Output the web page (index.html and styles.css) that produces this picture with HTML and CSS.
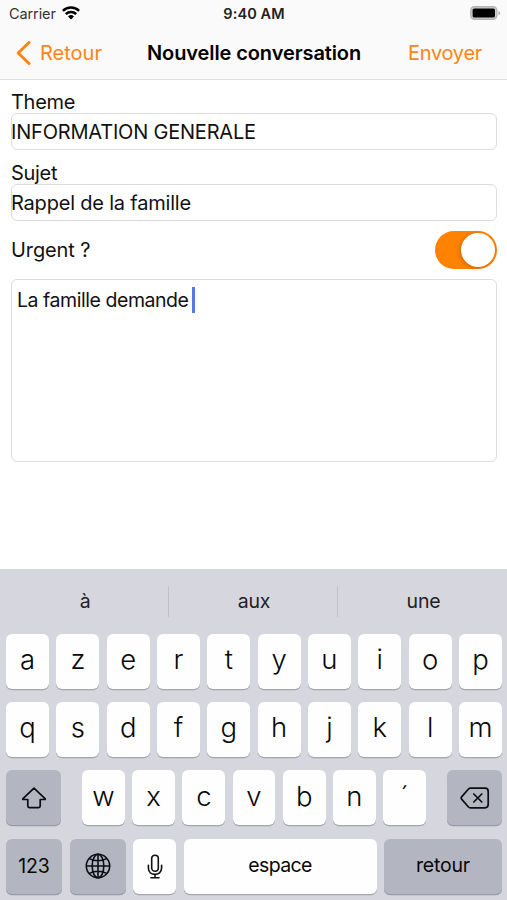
FILE: index.html
```html
<!DOCTYPE html>
<html lang="fr">
<head>
<meta charset="utf-8">
<title>Nouvelle conversation</title>
<link rel="stylesheet" href="styles.css">
</head>
<body>
<div class="screen">
  <header class="top">
    <div class="status">
      <div class="carrier"><span>Carrier</span>
        <svg class="wifi" width="18" height="14" viewBox="0 0 18 14"><g fill="none" stroke="#000" stroke-width="2.5"><path d="M.9 4.9a11.5 11.5 0 0 1 16.2 0"/><path d="M3.8 8.1a7.4 7.4 0 0 1 10.4 0"/></g><path d="M9 13.6 6 10.5a4.3 4.3 0 0 1 6 0z"/></svg>
      </div>
      <span class="clock">9:40 AM</span>
      <svg class="battery" width="31" height="14" viewBox="0 0 31 14"><rect x=".8" y=".8" width="26" height="12.4" rx="3.6" fill="#d0d0d0" stroke="#b4b4b4" stroke-width="1.4"/><rect x="2.6" y="2.4" width="22.4" height="9.2" rx="1.6"/><path d="M28.4 4.7c2.4.8 2.4 3.8 0 4.6z" fill="#b4b4b4"/></svg>
    </div>
    <nav class="nav">
      <a class="back"><svg width="15" height="24" viewBox="0 0 15 24"><path d="M13 1.5 2.2 12 13 22.5" fill="none" stroke="#ff8412" stroke-width="3" stroke-linecap="round" stroke-linejoin="round"/></svg><span>Retour</span></a>
      <h1>Nouvelle conversation</h1>
      <a class="send">Envoyer</a>
    </nav>
  </header>
  <main class="form">
    <div class="label theme">Theme</div>
    <div class="field"><span>INFORMATION GENERALE</span></div>
    <div class="label subject">Sujet</div>
    <div class="field"><span>Rappel de la famille</span></div>
    <div class="urgent"><span>Urgent ?</span><div class="switch"><div class="knob"></div></div></div>
    <div class="area"><span class="msg">La famille demande</span><i class="caret"></i></div>
  </main>
  <section class="keyboard">
    <div class="hints"><span>à</span><span>aux</span><span>une</span></div>
    <div class="row"><b>a</b><b>z</b><b>e</b><b>r</b><b>t</b><b>y</b><b>u</b><b>i</b><b>o</b><b>p</b></div>
    <div class="row"><b>q</b><b>s</b><b>d</b><b>f</b><b>g</b><b>h</b><b>j</b><b>k</b><b>l</b><b>m</b></div>
    <div class="row third">
      <b class="dark side"><svg width="26" height="24" viewBox="0 0 26 24"><path d="M13 2.2 2 12.6q-.8.9.5.9h4.3v6.6q0 1.6 1.6 1.6h9.2q1.6 0 1.6-1.6v-6.6h4.3q1.3 0 .5-.9z" fill="none" stroke="#0c0d14" stroke-width="1.7" stroke-linejoin="round"/></svg></b>
      <div class="letters"><b>w</b><b>x</b><b>c</b><b>v</b><b>b</b><b>n</b><b>´</b></div>
      <b class="dark side"><svg width="30" height="22" viewBox="0 0 30 22"><g fill="none" stroke="#0c0d14" stroke-width="1.7" stroke-linejoin="round" stroke-linecap="round"><path d="M10.5 1.2H25q3.2 0 3.2 3.2v13.2q0 3.2-3.2 3.2H10.5q-1.2 0-2-.8L1.8 12.4q-1.2-1.4 0-2.8L8.5 2q.8-.8 2-.8z"/><path d="m13.8 7 8 8m0-8-8 8"/></g></svg></b>
    </div>
    <div class="row fourth">
      <b class="dark num">123</b>
      <b class="dark"><svg width="26" height="26" viewBox="0 0 26 26"><g fill="none" stroke="#0c0d14" stroke-width="1.6"><circle cx="13" cy="13" r="11.7"/><ellipse cx="13" cy="13" rx="5.8" ry="11.7"/><path d="M13 1.3v23.4M1.3 13h23.4M4.3 5.6q8.7 4.4 17.4 0M4.3 20.4q8.7-4.4 17.4 0"/></g></svg></b>
      <b><svg width="16" height="25" viewBox="0 0 16 25"><g fill="none" stroke="#111" stroke-width="1.6" stroke-linecap="round"><rect x="4.7" y="1.2" width="6.6" height="16" rx="3.3"/><path d="M1.4 11.2v2.9c0 8.4 13.2 8.4 13.2 0v-2.9M8 20.5v3.2M4 23.7h8"/></g></svg></b>
      <b class="word space">espace</b>
      <b class="dark word">retour</b>
    </div>
  </section>
</div>
</body>
</html>
```
FILE: styles.css
```css
* { box-sizing: border-box; }
body { margin: 0; background: #fff; font-family: Inter, "Liberation Sans", sans-serif; color: #111; }
.screen { width: 507px; height: 900px; display: flex; flex-direction: column; overflow: hidden; }
.top { height: 80px; background: #fafafa; border-bottom: 1.5px solid #e0e0e0; }
.status { height: 27px; display: grid; grid-template-columns: 1fr auto 1fr; align-items: center; padding: 0 8px 0 9px; font-size: 14.5px; }
.carrier { display: flex; align-items: center; gap: 6px; color: #333; letter-spacing: -.1px; }
.wifi { margin-top: -2px; }
.clock { font-weight: 600; color: #222; letter-spacing: .1px; }
.battery { justify-self: end; margin: -1px -2px 0 0; }
.nav { height: 52px; display: grid; grid-template-columns: 131px 1fr auto; align-items: center; padding: 0 25px 0 16px; font-size: 20px; color: #ff8412; }
.back { display: flex; align-items: center; gap: 9px; }
.nav h1 { margin: 0; font-size: 20px; font-weight: 600; color: #000; letter-spacing: -.1px; white-space: nowrap; }
.send { letter-spacing: -.3px; }
.form { flex: 1; padding: 0 10px 0 11px; font-size: 20px; }
.label { line-height: 24px; letter-spacing: -.3px; }
.theme { margin-top: 10px; height: 23px; }
.subject { margin-top: 11px; height: 23px; }
.field { height: 37px; border: 1.5px solid #dcdcdc; border-radius: 6px; line-height: 37px; white-space: nowrap; }
.field span { margin-left: -1px; letter-spacing: -.2px; }
.urgent { height: 58px; display: flex; align-items: center; justify-content: space-between; letter-spacing: -.1px; }
.switch { width: 62px; height: 38px; border-radius: 19px; background: #ff8200; padding: 2px; display: flex; justify-content: flex-end; }
.knob { width: 34px; height: 34px; border-radius: 50%; background: #fff; box-shadow: -1px 1px 4px rgba(100,50,0,.35); }
.area { height: 183px; border: 1.5px solid #dcdcdc; border-radius: 6px; padding: 6px 5px; display: flex; align-items: flex-start; line-height: 28px; font-size: 19.5px; }
.msg { letter-spacing: -.45px; }
.caret { width: 3px; height: 26px; margin: 1px 0 0 3.5px; background: #5479df; }
.keyboard { height: 331px; background: #d6d7de; padding: 0 5px 0 6px; }
.hints { height: 64.5px; margin: 0 -5px 0 -6px; display: grid; grid-template-columns: repeat(3, 1fr); align-items: center; font-size: 19.5px; color: #222; }
.hints span { height: 31px; line-height: 31px; padding-left: 2px; text-align: center; letter-spacing: -.2px; border-right: 1px solid #c1c2c9; }
.hints span:last-child { border: 0; }
.row { height: 55px; margin-bottom: 13.4px; display: grid; grid-template-columns: repeat(10, 1fr); gap: 7.2px; }
.row b { display: flex; align-items: center; justify-content: center; background: #fefefe; border-radius: 6px; box-shadow: 0 1.3px 0 #a3a5ad; font-weight: 350; font-size: 27.5px; padding-bottom: 4px; color: #080808; }
.row.third { grid-template-columns: 55px 344px 55px; justify-content: space-between; gap: 0; }
.letters { display: grid; grid-template-columns: repeat(7, 1fr); gap: 7.2px; }
.row b.dark { background: #b3b6c1; box-shadow: 0 1.3px 0 #989ba5; }
.row b svg { margin-top: 4px; }
.row.fourth { grid-template-columns: 56px 56px 43px 193px 1fr; gap: 7.5px; }
.row b.word, .row b.num { font-size: 19.5px; font-weight: 400; padding-bottom: 2px; letter-spacing: -.2px; }
.row b.space { letter-spacing: -.6px; }
.row b.num { padding-bottom: 0; }
```
